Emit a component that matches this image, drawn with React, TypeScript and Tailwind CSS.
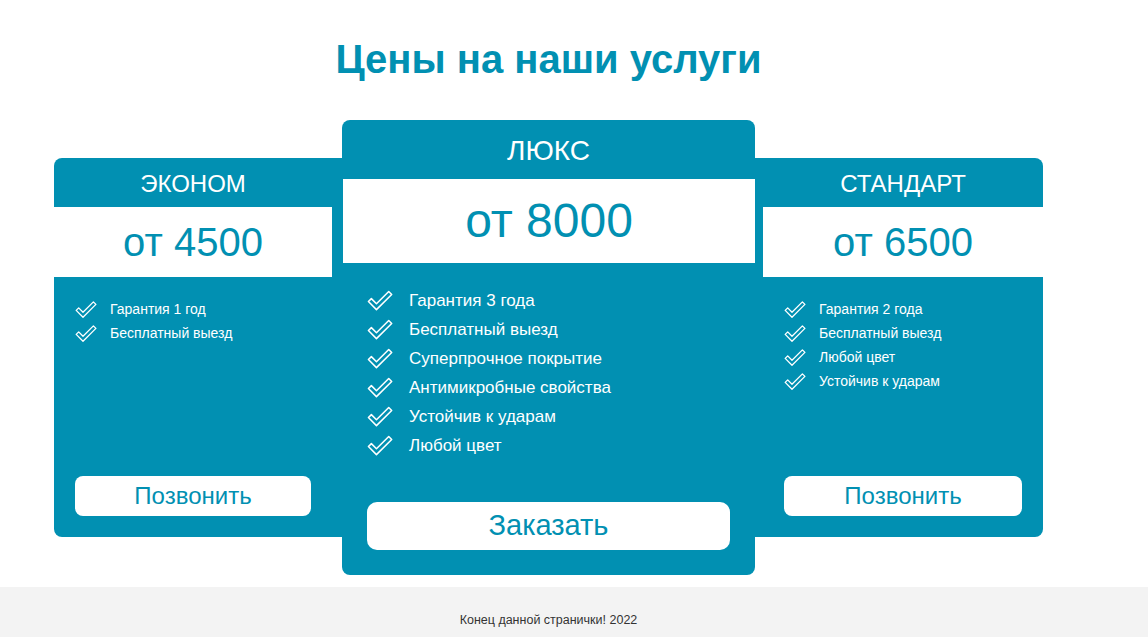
import React from 'react';

const teal = 'bg-[#0190b2]';

function Check({ big }: { big?: boolean }) {
  return (
    <svg
      viewBox="0 0 22 17"
      className={big ? 'w-[26px] h-[21px] shrink-0' : 'w-[22px] h-[17px] shrink-0'}
      fill="none"
      stroke="white"
      strokeWidth={1.3}
      strokeLinejoin="round"
    >
      <path d="M1.2 9.4 L3.7 6.9 L8 11.2 L18.4 0.9 L20.9 3.4 L8 16.2 Z" />
    </svg>
  );
}

interface Plan {
  title: string;
  price: string;
  features: string[];
  button: string;
}

const econom: Plan = {
  title: 'ЭКОНОМ',
  price: 'от 4500',
  features: ['Гарантия 1 год', 'Бесплатный выезд'],
  button: 'Позвонить',
};

const lux: Plan = {
  title: 'ЛЮКС',
  price: 'от 8000',
  features: [
    'Гарантия 3 года',
    'Бесплатный выезд',
    'Суперпрочное покрытие',
    'Антимикробные свойства',
    'Устойчив к ударам',
    'Любой цвет',
  ],
  button: 'Заказать',
};

const standard: Plan = {
  title: 'СТАНДАРТ',
  price: 'от 6500',
  features: ['Гарантия 2 года', 'Бесплатный выезд', 'Любой цвет', 'Устойчив к ударам'],
  button: 'Позвонить',
};

function SideCard({ plan, side }: { plan: Plan; side: 'left' | 'right' }) {
  return (
    <div
      className={
        side === 'left'
          ? `${teal} w-[288px] h-[379px] rounded-l-lg pr-[10px] flex`
          : `${teal} w-[288px] h-[379px] rounded-r-lg pl-[8px] flex`
      }
    >
      <div className="flex flex-col flex-1">
        <div className="h-[49px] flex items-center justify-center text-white text-[24px] pt-[2px]">
          {plan.title}
        </div>
        <div className="bg-white h-[70px] flex items-center justify-center text-[#0190b2] text-[40px]">
          {plan.price}
        </div>
        <ul className="mt-[20px] px-[21px]">
          {plan.features.map((f) => (
            <li key={f} className="h-[24px] flex items-center text-white text-[14px]">
              <Check />
              <span className="ml-[13px]">{f}</span>
            </li>
          ))}
        </ul>
        <div className="mt-auto mb-[21px] mx-[21px] h-[40px] bg-white rounded-lg flex items-center justify-center text-[#0190b2] text-[24px]">
          {plan.button}
        </div>
      </div>
    </div>
  );
}

function MainCard({ plan }: { plan: Plan }) {
  return (
    <div className={`${teal} w-[413px] h-[455px] rounded-lg flex flex-col`}>
      <div className="h-[59px] flex items-center justify-center text-white text-[28px] pt-[2px]">
        {plan.title}
      </div>
      <div className="bg-white h-[84px] ml-px flex items-center justify-center text-[#0190b2] text-[48px]">
        {plan.price}
      </div>
      <ul className="mt-[23px] px-[25px]">
        {plan.features.map((f) => (
          <li key={f} className="h-[29px] flex items-center text-white text-[17px]">
            <Check big />
            <span className="ml-[16px]">{f}</span>
          </li>
        ))}
      </ul>
      <div className="mt-auto mb-[25px] mx-[25px] h-[48px] bg-white rounded-[10px] flex items-center justify-center text-[#0190b2] text-[29px]">
        {plan.button}
      </div>
    </div>
  );
}

export default function App() {
  return (
    <div className="bg-white font-['Liberation_Sans',Arial,sans-serif]">
      <div className="w-[1097px] pt-[36px]">
        <h1 className="text-center text-[40px] leading-[46px] font-bold text-[#0190b2]">
          Цены на наши услуги
        </h1>
        <div className="mt-[38px] ml-[54px] flex items-center">
          <SideCard plan={econom} side="left" />
          <MainCard plan={lux} />
          <SideCard plan={standard} side="right" />
        </div>
      </div>
      <footer className="mt-[12px] h-[50px] bg-[#f3f3f3]">
        <div className="w-[1097px] pt-[26px] text-center text-[12.5px] leading-[14px] text-[#333]">
          Конец данной странички! 2022
        </div>
      </footer>
    </div>
  );
}
